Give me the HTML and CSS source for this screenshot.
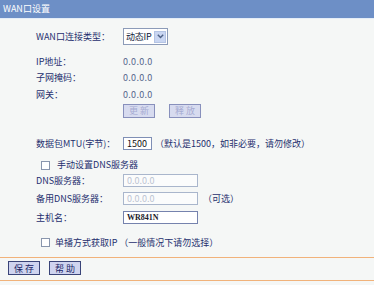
FILE: index.html
```html
<!DOCTYPE html>
<html lang="zh-CN">
<head>
<meta charset="utf-8">
<title>WAN口设置</title>
<link rel="stylesheet" href="styles.css">
</head>
<body>
<div class="page">
  <div class="title">WAN口设置</div>
  <div class="form">
    <div class="row row-wan">
      <span class="label">WAN口连接类型：</span>
      <div class="select">
        <span class="select-text">动态IP</span>
        <span class="select-btn">
          <svg width="7" height="5" viewBox="0 0 7 5"><path d="M0.8 0.8 L3.5 3.6 L6.2 0.8" fill="none" stroke="#4d6185" stroke-width="1.4"/></svg>
        </span>
      </div>
    </div>
    <div class="row row-ip"><span class="label">IP地址：</span><span class="value">0.0.0.0</span></div>
    <div class="row row-mask"><span class="label">子网掩码：</span><span class="value">0.0.0.0</span></div>
    <div class="row row-gw"><span class="label">网关：</span><span class="value">0.0.0.0</span></div>
    <div class="row row-btns">
      <span class="label"></span>
      <span class="btn btn-disabled">更 新</span>
      <span class="btn btn-disabled btn-second">释 放</span>
    </div>
    <div class="row row-mtu">
      <span class="label">数据包MTU(字节)：</span>
      <span class="input input-mtu">1500</span>
      <span class="note">（默认是1500，如非必要，请勿修改）</span>
    </div>
    <div class="row row-check row-dnscheck">
      <span class="check"></span><span class="check-text">手动设置DNS服务器</span>
    </div>
    <div class="row row-field row-dns">
      <span class="label">DNS服务器：</span>
      <span class="input input-wide input-disabled">0.0.0.0</span>
    </div>
    <div class="row row-field row-alt">
      <span class="label">备用DNS服务器：</span>
      <span class="input input-wide input-disabled">0.0.0.0</span>
      <span class="note note-opt">（可选）</span>
    </div>
    <div class="row row-field row-host">
      <span class="label">主机名：</span>
      <span class="input input-wide input-host">WR841N</span>
    </div>
    <div class="row row-check row-unicast">
      <span class="check"></span><span class="check-text check-text-near">单播方式获取IP （一般情况下请勿选择）</span>
    </div>
  </div>
  <div class="footer">
    <span class="btn btn-main">保 存</span>
    <span class="btn btn-main btn-help">帮 助</span>
  </div>
</div>
</body>
</html>
```

FILE: styles.css
```css
html, body {
  margin: 0;
  padding: 0;
  background: #f5f7f6;
}
body {
  font-family: "Noto Sans CJK SC", "DejaVu Sans", sans-serif;
  font-size: 9px;
  color: #1e2f6e;
}
.page {
  width: 374px;
  height: 285px;
  overflow: hidden;
}
.title {
  height: 18px;
  line-height: 18px;
  background: #6d8fc6;
  border-bottom: 1px solid #e4edf8;
  color: #ffffff;
  padding-left: 3px;
  font-size: 9px;
}
.form {
  padding-left: 36px;
}
.row {
  display: flex;
  align-items: center;
  line-height: 12px;
  white-space: nowrap;
}
.label {
  width: 87px;
  flex: none;
}
.value {
  color: #56668c;
  letter-spacing: 0.3px;
}
.row-wan { margin-top: 9px; height: 17px; }
.row-ip { margin-top: 9px; height: 16px; }
.row-mask { height: 16px; }
.row-gw { margin-top: 1px; height: 16px; }
.row-btns { margin-top: 1px; height: 14px; }
.row-mtu { margin-top: 19px; height: 13px; }
.row-dnscheck { margin-top: 7px; height: 16px; }
.row-dns { margin-top: 1px; height: 13px; }
.row-alt { margin-top: 5px; height: 13px; }
.row-host { margin-top: 6px; height: 13px; }
.row-unicast { margin-top: 14px; height: 9px; }

.select {
  box-sizing: border-box;
  width: 45px;
  height: 17px;
  border: 1px solid #8c9bb8;
  background: #ffffff;
  display: flex;
  align-items: center;
  padding: 1px;
}
.select-text {
  flex: 1;
  padding-left: 1px;
  color: #111a3a;
  letter-spacing: -0.2px;
}
.select-btn {
  width: 12px;
  height: 12px;
  box-sizing: border-box;
  background: #c9d6f2;
  border: 1px solid #b4c4e4;
  display: flex;
  align-items: center;
  justify-content: center;
  flex: none;
}

.btn {
  box-sizing: border-box;
  height: 14px;
  width: 32px;
  display: flex;
  align-items: center;
  justify-content: center;
  flex: none;
}
.btn-disabled {
  background: #d7dbef;
  border: 1px solid #8890bc;
  color: #a6abd2;
}
.btn-second { margin-left: 14px; }

.input {
  box-sizing: border-box;
  height: 13px;
  border: 1px solid #7f8fb5;
  background: #ffffff;
  padding-left: 3px;
  display: flex;
  align-items: center;
  color: #111111;
  flex: none;
}
.input-mtu { width: 29px; }
.input-wide { width: 75px; }
.input-disabled {
  border-color: #a9b6cc;
  color: #bcc4d2;
  background: #fbfcfc;
}
.input-host {
  font-family: "Liberation Serif", serif;
  font-weight: bold;
  font-size: 8px;
  color: #1a1a2a;
  border-color: #7582ad;
}
.note {
  margin-left: 3px;
  color: #1e2f6e;
}
.note-opt { margin-left: 5px; }

.row-check { padding-left: 5px; }
.check {
  box-sizing: border-box;
  width: 9px;
  height: 9px;
  border: 1px solid #8996ad;
  background: #ffffff;
  flex: none;
}
.check-text { margin-left: 7px; }
.check-text-near { margin-left: 5px; }

.footer {
  margin-top: 10px;
  border-top: 1px solid #f1b27a;
  border-bottom: 1px solid #f1b27a;
  padding: 3px 0 5px 8px;
  display: flex;
}
.btn-main {
  background: #cfd4ef;
  border: 1px solid #3a4478;
  color: #1a2566;
}
.btn-help { margin-left: 9px; }
```
